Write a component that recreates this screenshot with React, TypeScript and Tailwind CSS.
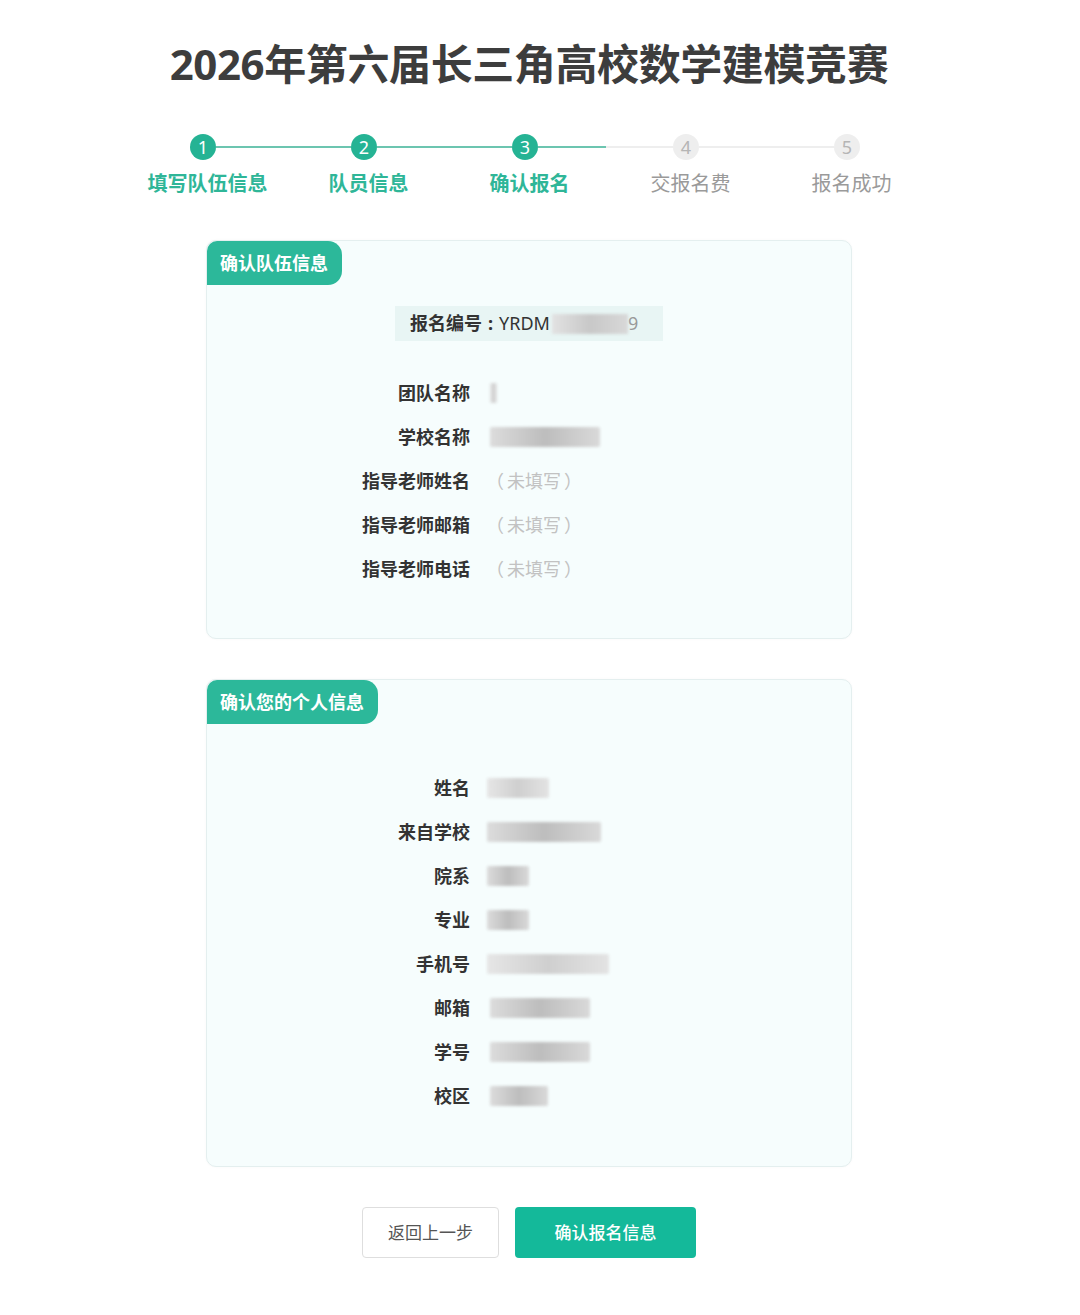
import React from 'react';

const FONT = '"Noto Sans", "Noto Sans CJK SC", sans-serif';

const steps = [
    { n: 1, label: '填写队伍信息', done: true },
    { n: 2, label: '队员信息', done: true },
    { n: 3, label: '确认报名', done: true },
    { n: 4, label: '交报名费', done: false },
    { n: 5, label: '报名成功', done: false },
];

// blurred placeholder for hidden personal data
function Blur({ w, dark = false }: { w: number; dark?: boolean }) {
    return (
        <div
            className={`h-[20px] rounded-[2px] blur-[1.5px] ${dark ? 'bg-gradient-to-r from-[#dcdcdc] via-[#bdbdbd] to-[#d9d9d9]' : 'bg-gradient-to-r from-[#e6e6e6] via-[#cfcfcf] to-[#e3e3e3]'}`}
            style={{ width: w }}
        />
    );
}

function Row({ label, children }: { label: string; children: React.ReactNode }) {
    return (
        <div className="flex items-center h-[44px]">
            <div className="w-[263px] text-right text-[18px] font-bold text-[#333]">{label}</div>
            <div className="ml-[20px] flex items-center">{children}</div>
        </div>
    );
}

function Empty() {
    return (
        <span className="text-[18px] text-[#c2c2c2] -ml-[4px]">
            （<span className="px-[3px]">未填写</span>）
        </span>
    );
}

function Card({ title, tabW, children }: { title: string; tabW: number; children: React.ReactNode }) {
    return (
        <div className="w-[646px] rounded-[10px] border border-[#e4efef] bg-[#f6fdfd] shadow-[0_0_3px_rgba(0,0,0,0.03)]">
            <div
                className="h-[44px] flex items-center pl-[13px] bg-[#2cb89a] text-white text-[18px] font-bold rounded-tl-[10px] rounded-br-[14px] rounded-tr-[14px]"
                style={{ width: tabW }}
            >
                {title}
            </div>
            {children}
        </div>
    );
}

export default function App() {
    return (
        <div className="w-[1058px] bg-white min-h-[1315px]" style={{ fontFamily: FONT }}>
            <h1 className="pt-[36px] text-center text-[42px] leading-[56px] font-bold text-[#3d3d3d] tracking-[-0.4px]">
                2026年第六届长三角高校数学建模竞赛
            </h1>

            {/* steps */}
            <div className="mt-[42px] ml-[190px] flex items-center">
                {steps.map((s, i) => (
                    <React.Fragment key={s.n}>
                        <div
                            className={`w-[26px] h-[26px] rounded-full flex items-center justify-center text-[18px] leading-none ${s.done ? 'bg-[#25b394] text-white' : 'bg-[#eeeeee] text-[#b5b5b5]'}`}
                        >
                            {s.n}
                        </div>
                        {i < steps.length - 1 && (
                            <div className="w-[135px] h-[2px] flex">
                                <div className={`w-1/2 h-full ${i < 3 ? 'bg-[#6cc5b0]' : 'bg-[#eeeeee]'}`} />
                                <div className={`w-1/2 h-full ${i < 2 ? 'bg-[#6cc5b0]' : 'bg-[#eeeeee]'}`} />
                            </div>
                        )}
                    </React.Fragment>
                ))}
            </div>
            <div className="mt-[10px] ml-[127px] flex">
                {steps.map((s) => (
                    <div
                        key={s.n}
                        className={`w-[161px] text-center text-[20px] leading-[28px] ${s.done ? 'font-bold text-[#2fb698]' : 'text-[#9a9a9a]'}`}
                    >
                        {s.label}
                    </div>
                ))}
            </div>

            <div className="mt-[42px] flex flex-col items-center gap-[40px]">
                <Card title="确认队伍信息" tabW={135}>
                    <div className="flex justify-center mt-[21px]">
                        <div className="w-[268px] h-[35px] bg-[#e8f5f4] flex items-center pl-[15px] text-[18px] text-[#333]">
                            <span className="font-bold">报名编号</span>
                            <span className="font-bold px-[6px]">:</span>
                            <span>YRDM</span>
                            <div className="ml-[2px] w-[76px] h-[20px] bg-gradient-to-r from-[#e2e2e2] via-[#c8c8c8] to-[#d8d8d8] blur-[1.5px]" />
                            <span className="text-[#999]">9</span>
                        </div>
                    </div>
                    <div className="mt-[30px] pb-[47px]">
                        <Row label="团队名称"><Blur w={7} /></Row>
                        <Row label="学校名称"><Blur w={110} dark /></Row>
                        <Row label="指导老师姓名"><Empty /></Row>
                        <Row label="指导老师邮箱"><Empty /></Row>
                        <Row label="指导老师电话"><Empty /></Row>
                    </div>
                </Card>

                <Card title="确认您的个人信息" tabW={171}>
                    <div className="mt-[42px] pb-[48px]">
                        <Row label="姓名"><div className="-ml-[3px]"><Blur w={62} /></div></Row>
                        <Row label="来自学校"><div className="-ml-[3px]"><Blur w={114} dark /></div></Row>
                        <Row label="院系"><div className="-ml-[3px]"><Blur w={42} dark /></div></Row>
                        <Row label="专业"><div className="-ml-[3px]"><Blur w={42} dark /></div></Row>
                        <Row label="手机号"><div className="-ml-[3px]"><Blur w={122} /></div></Row>
                        <Row label="邮箱"><Blur w={100} dark /></Row>
                        <Row label="学号"><Blur w={100} dark /></Row>
                        <Row label="校区"><Blur w={58} dark /></Row>
                    </div>
                </Card>
            </div>

            <div className="mt-[40px] flex justify-center gap-[16px]">
                <button className="w-[137px] h-[51px] rounded-[4px] border border-[#dedede] bg-white text-[17px] text-[#555]">
                    返回上一步
                </button>
                <button className="w-[181px] h-[51px] rounded-[4px] bg-[#14b99a] text-[17px] text-white font-medium">
                    确认报名信息
                </button>
            </div>
        </div>
    );
}
